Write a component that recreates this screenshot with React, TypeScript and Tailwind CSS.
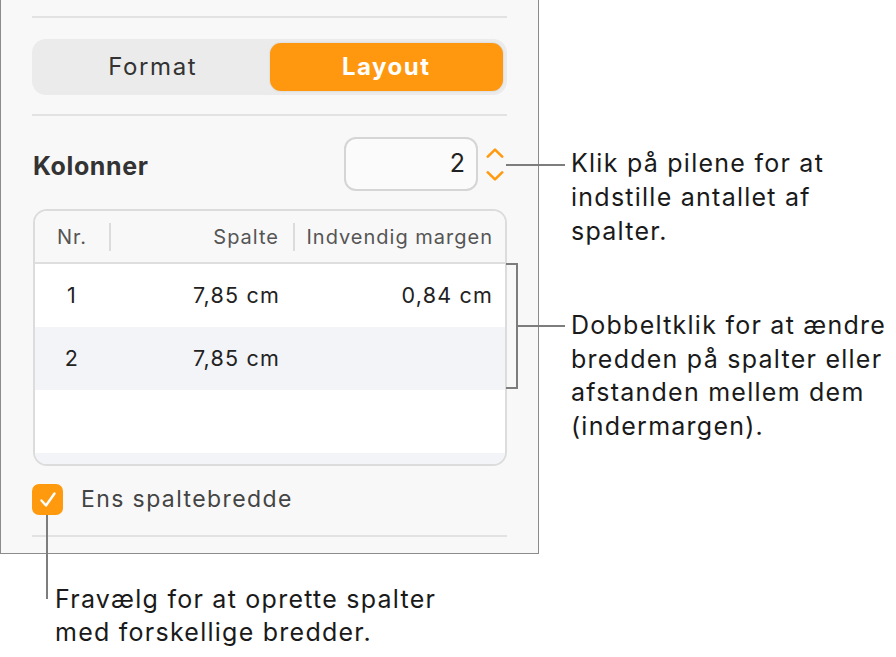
import React from "react";

const font = { fontFamily: "Inter, 'Noto Sans', sans-serif" };

function ChevronUp() {
  return (
    <svg width="18" height="10" viewBox="0 0 18 10" fill="none">
      <path d="M1.8 8.6 L9 1.6 L16.2 8.6" stroke="#ff9a0e" strokeWidth="2.6" strokeLinecap="round" strokeLinejoin="round" />
    </svg>
  );
}
function ChevronDown() {
  return (
    <svg width="18" height="10" viewBox="0 0 18 10" fill="none">
      <path d="M1.8 1.4 L9 8.4 L16.2 1.4" stroke="#ff9a0e" strokeWidth="2.6" strokeLinecap="round" strokeLinejoin="round" />
    </svg>
  );
}

function Row({ nr, col, margin, shaded }: { nr?: string; col?: string; margin?: string; shaded?: boolean }) {
  return (
    <div
      className={`flex h-[63px] shrink-0 items-center text-[21.5px] tracking-[1.2px] text-[#222] ${shaded ? "bg-[#f3f4f8]" : "bg-white"}`}
    >
      <div className="w-[74px] text-center">{nr}</div>
      <div className="w-[184px] pr-[13px] text-right">{col}</div>
      <div className="flex-1 pr-[12px] text-right">{margin}</div>
    </div>
  );
}

export default function App() {
  return (
    <div className="relative h-[657px] w-[896px] overflow-hidden bg-white" style={font}>
      <div className="flex h-[554px] w-[539px] flex-col border-x border-b border-[#8c8c8c] bg-[#f8f8f8] px-[31px] pt-[16px]">
        <div className="h-[2px] bg-[#e2e2e2]" />
        <div className="mt-[21px] grid h-[56px] grid-cols-2 rounded-[14px] bg-[#ebebeb] p-[4px]">
          <div className="flex items-center justify-center text-[24px] tracking-[1.6px] text-[#333]">Format</div>
          <div className="flex items-center justify-center rounded-[11px] bg-[#ff980f] text-[24px] font-bold tracking-[1.5px] text-white shadow-[0_0_2px_rgba(0,0,0,0.15)]">
            Layout
          </div>
        </div>
        <div className="mt-[19px] h-[2px] bg-[#e2e2e2]" />
        <div className="mt-[21px] flex h-[54px] items-center">
          <div className="flex-1 pl-px pt-[5px] text-[25px] font-bold tracking-[0.6px] text-[#333]">Kolonner</div>
          <div className="flex h-[54px] w-[134px] items-center justify-end rounded-[12px] border-2 border-[#d5d5d5] bg-[#fbfbfb] pr-[11px] text-[25px] text-[#222]">
            2
          </div>
          <div className="ml-[8px] mr-[3px] flex flex-col items-center gap-[13px] pt-[1px]">
            <ChevronUp />
            <ChevronDown />
          </div>
        </div>
        <div className="mt-[18px] ml-px flex h-[257px] flex-col overflow-hidden rounded-[14px] border-2 border-[#dcdcdc] bg-white">
          <div className="flex h-[53px] shrink-0 items-center border-b-2 border-[#dedede] bg-[#f8f8f8] text-[20px] tracking-[1px] text-[#555]">
            <div className="w-[74px] pl-[22px]">Nr.</div>
            <div className="h-[28px] w-[2px] bg-[#dcdcdc]" />
            <div className="w-[182px] pr-[14px] text-right">Spalte</div>
            <div className="h-[28px] w-[2px] bg-[#dcdcdc]" />
            <div className="flex-1 pr-[12px] text-right">Indvendig margen</div>
          </div>
          <Row nr="1" col="7,85 cm" margin="0,84 cm" />
          <Row nr="2" col="7,85 cm" shaded />
          <Row />
          <Row shaded />
        </div>
        <div className="mt-[18px] flex h-[31px] items-center">
          <div className="flex h-[31px] w-[31px] items-center justify-center rounded-[7px] bg-[#ff9a0e]">
            <svg width="22" height="20" viewBox="0 0 22 20" fill="none">
              <path d="M4.5 10.5 L9 15.5 L17.5 3.5" stroke="white" strokeWidth="2.4" strokeLinecap="round" strokeLinejoin="round" />
            </svg>
          </div>
          <div className="ml-[18px] text-[23px] tracking-[1.4px] text-[#444]">Ens spaltebredde</div>
        </div>
        <div className="mt-[20px] h-[2px] bg-[#e2e2e2]" />
      </div>

      {/* callout 1 */}
      <div className="absolute left-[506px] top-[164px] h-[2px] w-[59px] bg-[#7d7d7d]" />
      <div className="absolute left-[571px] top-[146px] text-[25px] leading-[34px] tracking-[1.25px] text-[#1a1a1a]">
        <div>Klik på pilene for at</div>
        <div>indstille antallet af</div>
        <div>spalter.</div>
      </div>

      {/* callout 2 */}
      <div className="absolute left-[506px] top-[263px] h-[126px] w-[12px] border-y-2 border-r-2 border-[#7d7d7d]" />
      <div className="absolute left-[517px] top-[325px] h-[2px] w-[48px] bg-[#7d7d7d]" />
      <div className="absolute left-[571px] top-[309px] text-[25px] leading-[33.6px] tracking-[1.25px] text-[#1a1a1a]">
        <div>Dobbeltklik for at ændre</div>
        <div>bredden på spalter eller</div>
        <div>afstanden mellem dem</div>
        <div>(indermargen).</div>
      </div>

      {/* callout 3 */}
      <div className="absolute left-[46px] top-[515px] h-[84px] w-[2px] bg-[#7d7d7d]" />
      <div className="absolute left-[55px] top-[583px] text-[25px] leading-[33px] tracking-[1.25px] text-[#1a1a1a]">
        <div>Fravælg for at oprette spalter</div>
        <div>med forskellige bredder.</div>
      </div>
    </div>
  );
}
